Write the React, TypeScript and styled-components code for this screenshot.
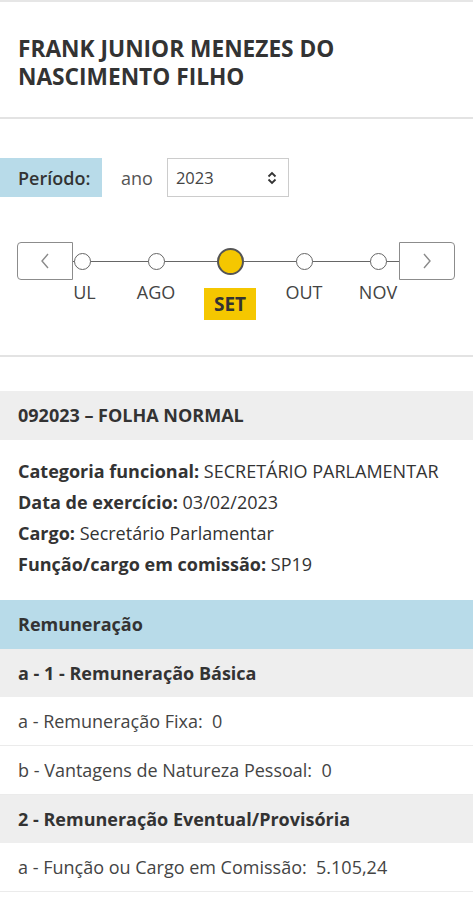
import styled, { createGlobalStyle } from "styled-components";

const GlobalStyle = createGlobalStyle`
  body {
    margin: 0;
    background: #fff;
    font-family: "Open Sans", "Noto Sans", sans-serif;
    color: #333;
  }
`;

const months = [
  { label: "JUL" },
  { label: "AGO" },
  { label: "SET", active: true },
  { label: "OUT" },
  { label: "NOV" },
];

const details = [
  { key: "Categoria funcional:", value: "SECRETÁRIO PARLAMENTAR" },
  { key: "Data de exercício:", value: "03/02/2023" },
  { key: "Cargo:", value: "Secretário Parlamentar" },
  { key: "Função/cargo em comissão:", value: "SP19" },
];

function Chevron({ dir }: { dir: "left" | "right" }) {
  return (
    <svg width="10" height="16" viewBox="0 0 10 16" fill="none">
      <path
        d={dir === "left" ? "M8 1 L2 8 L8 15" : "M2 1 L8 8 L2 15"}
        stroke="#8a8a8a"
        strokeWidth="1.4"
      />
    </svg>
  );
}

function UpDown() {
  return (
    <svg width="12" height="14" viewBox="0 0 12 14" fill="none">
      <path d="M2.5 5.5 L6 2 L9.5 5.5" stroke="#333" strokeWidth="1.8" />
      <path d="M2.5 8.5 L6 12 L9.5 8.5" stroke="#333" strokeWidth="1.8" />
    </svg>
  );
}

export default function App() {
  return (
    <Page>
      <GlobalStyle />
      <Header>
        <Title>FRANK JUNIOR MENEZES DO NASCIMENTO FILHO</Title>
      </Header>

      <PeriodRow>
        <PeriodLabel>Período:</PeriodLabel>
        <YearText>ano</YearText>
        <YearSelect>
          <span>2023</span>
          <UpDown />
        </YearSelect>
      </PeriodRow>

      <Timeline>
        <NavButton $side="left">
          <Chevron dir="left" />
        </NavButton>
        <Track>
          <Strip>
            {months.map((m) => (
              <Month key={m.label}>
                <Dot $active={m.active} />
                <MonthLabel $active={m.active}>{m.label}</MonthLabel>
              </Month>
            ))}
          </Strip>
        </Track>
        <NavButton $side="right">
          <Chevron dir="right" />
        </NavButton>
      </Timeline>

      <Divider />

      <SectionHead>092023 – FOLHA NORMAL</SectionHead>
      <Details>
        {details.map((d) => (
          <DetailLine key={d.key}>
            <b>{d.key}</b> {d.value}
          </DetailLine>
        ))}
      </Details>

      <BlueHead>Remuneração</BlueHead>
      <GroupHead>a - 1 - Remuneração Básica</GroupHead>
      <Row>a - Remuneração Fixa:&nbsp; 0</Row>
      <Row>b - Vantagens de Natureza Pessoal:&nbsp; 0</Row>
      <GroupHead>2 - Remuneração Eventual/Provisória</GroupHead>
      <Row>a - Função ou Cargo em Comissão:&nbsp; 5.105,24</Row>
    </Page>
  );
}

const Page = styled.div`
  border-top: 2px solid #e6e6e6;
  min-height: 900px;
  box-sizing: border-box;
`;

const Header = styled.header`
  padding: 33px 18px 26px;
  border-bottom: 2px solid #e3e3e3;
`;

const Title = styled.h1`
  margin: 0;
  font-size: 22.7px;
  line-height: 28px;
  font-weight: 700;
  color: #333;
  max-width: 345px;
`;

const PeriodRow = styled.div`
  display: flex;
  align-items: center;
  margin-top: 39px;
  height: 39px;
`;

const PeriodLabel = styled.div`
  background: #b8dbe9;
  height: 39px;
  width: 102px;
  box-sizing: border-box;
  padding-left: 18px;
  display: flex;
  align-items: center;
  font-size: 18px;
  font-weight: 600;
  color: #333;
`;

const YearText = styled.span`
  margin-left: 19px;
  font-size: 18px;
  color: #555;
`;

const YearSelect = styled.div`
  margin-left: 14px;
  width: 122px;
  height: 39px;
  box-sizing: border-box;
  border: 1px solid #ccc;
  display: flex;
  align-items: center;
  justify-content: space-between;
  padding: 0 10px 0 8px;
  font-size: 16.5px;
  color: #444;
`;

const Timeline = styled.div`
  display: flex;
  align-items: flex-start;
  margin: 45px 18px 0 17px;
`;

const NavButton = styled.div<{ $side: "left" | "right" }>`
  flex: none;
  width: 56px;
  height: 38px;
  box-sizing: border-box;
  border: 1px solid #8c8c8c;
  border-radius: ${({ $side }) => ($side === "left" ? "4px 0 0 4px" : "0 4px 4px 0")};
  display: flex;
  align-items: center;
  justify-content: center;
  background: #fff;
`;

const Track = styled.div`
  flex: 1;
  overflow: hidden;
`;

const Strip = styled.div`
  display: flex;
  margin-left: -28px;
`;

const Month = styled.div`
  flex: none;
  width: 74px;
  display: flex;
  flex-direction: column;
  align-items: center;
  position: relative;

  &::before {
    content: "";
    position: absolute;
    left: 0;
    right: 0;
    top: 19px;
    height: 1px;
    background: #666;
  }
`;

const Dot = styled.div<{ $active?: boolean }>`
  position: relative;
  box-sizing: border-box;
  width: ${({ $active }) => ($active ? "27px" : "17px")};
  height: ${({ $active }) => ($active ? "27px" : "17px")};
  margin: ${({ $active }) => ($active ? "6px 0 5px" : "11px 0 10px")};
  border-radius: 50%;
  border: ${({ $active }) => ($active ? "2px solid #555" : "1px solid #666")};
  background: ${({ $active }) => ($active ? "#f5c700" : "#fff")};
`;

const MonthLabel = styled.div<{ $active?: boolean }>`
  font-size: ${({ $active }) => ($active ? "19px" : "18px")};
  font-weight: ${({ $active }) => ($active ? 700 : 400)};
  line-height: ${({ $active }) => ($active ? "32px" : "23px")};
  margin-top: ${({ $active }) => ($active ? "8px" : "1px")};
  padding: ${({ $active }) => ($active ? "0 10px" : "0")};
  background: ${({ $active }) => ($active ? "#f5c700" : "transparent")};
  color: ${({ $active }) => ($active ? "#333" : "#444")};
`;

const Divider = styled.hr`
  margin: 35px 0 0;
  border: 0;
  height: 2px;
  background: #e3e3e3;
`;

const SectionHead = styled.div`
  margin-top: 34px;
  background: #eeeeee;
  height: 49px;
  line-height: 49px;
  padding: 0 18px;
  font-size: 18px;
  font-weight: 700;
  color: #333;
`;

const Details = styled.div`
  padding: 16px 18px 20px;
`;

const DetailLine = styled.div`
  font-size: 18px;
  line-height: 31px;
  color: #333;

  b {
    font-weight: 700;
  }
`;

const BlueHead = styled.div`
  background: #b8dbe9;
  height: 49px;
  line-height: 49px;
  padding: 0 18px;
  font-size: 18px;
  font-weight: 700;
  color: #333;
`;

const GroupHead = styled.div`
  background: #eeeeee;
  height: 48px;
  line-height: 48px;
  padding: 0 18px;
  font-size: 18px;
  font-weight: 700;
  color: #333;
`;

const Row = styled.div`
  height: 49px;
  line-height: 48px;
  box-sizing: border-box;
  border-bottom: 1px solid #ebebeb;
  padding: 0 18px;
  font-size: 18px;
  color: #444;
`;
